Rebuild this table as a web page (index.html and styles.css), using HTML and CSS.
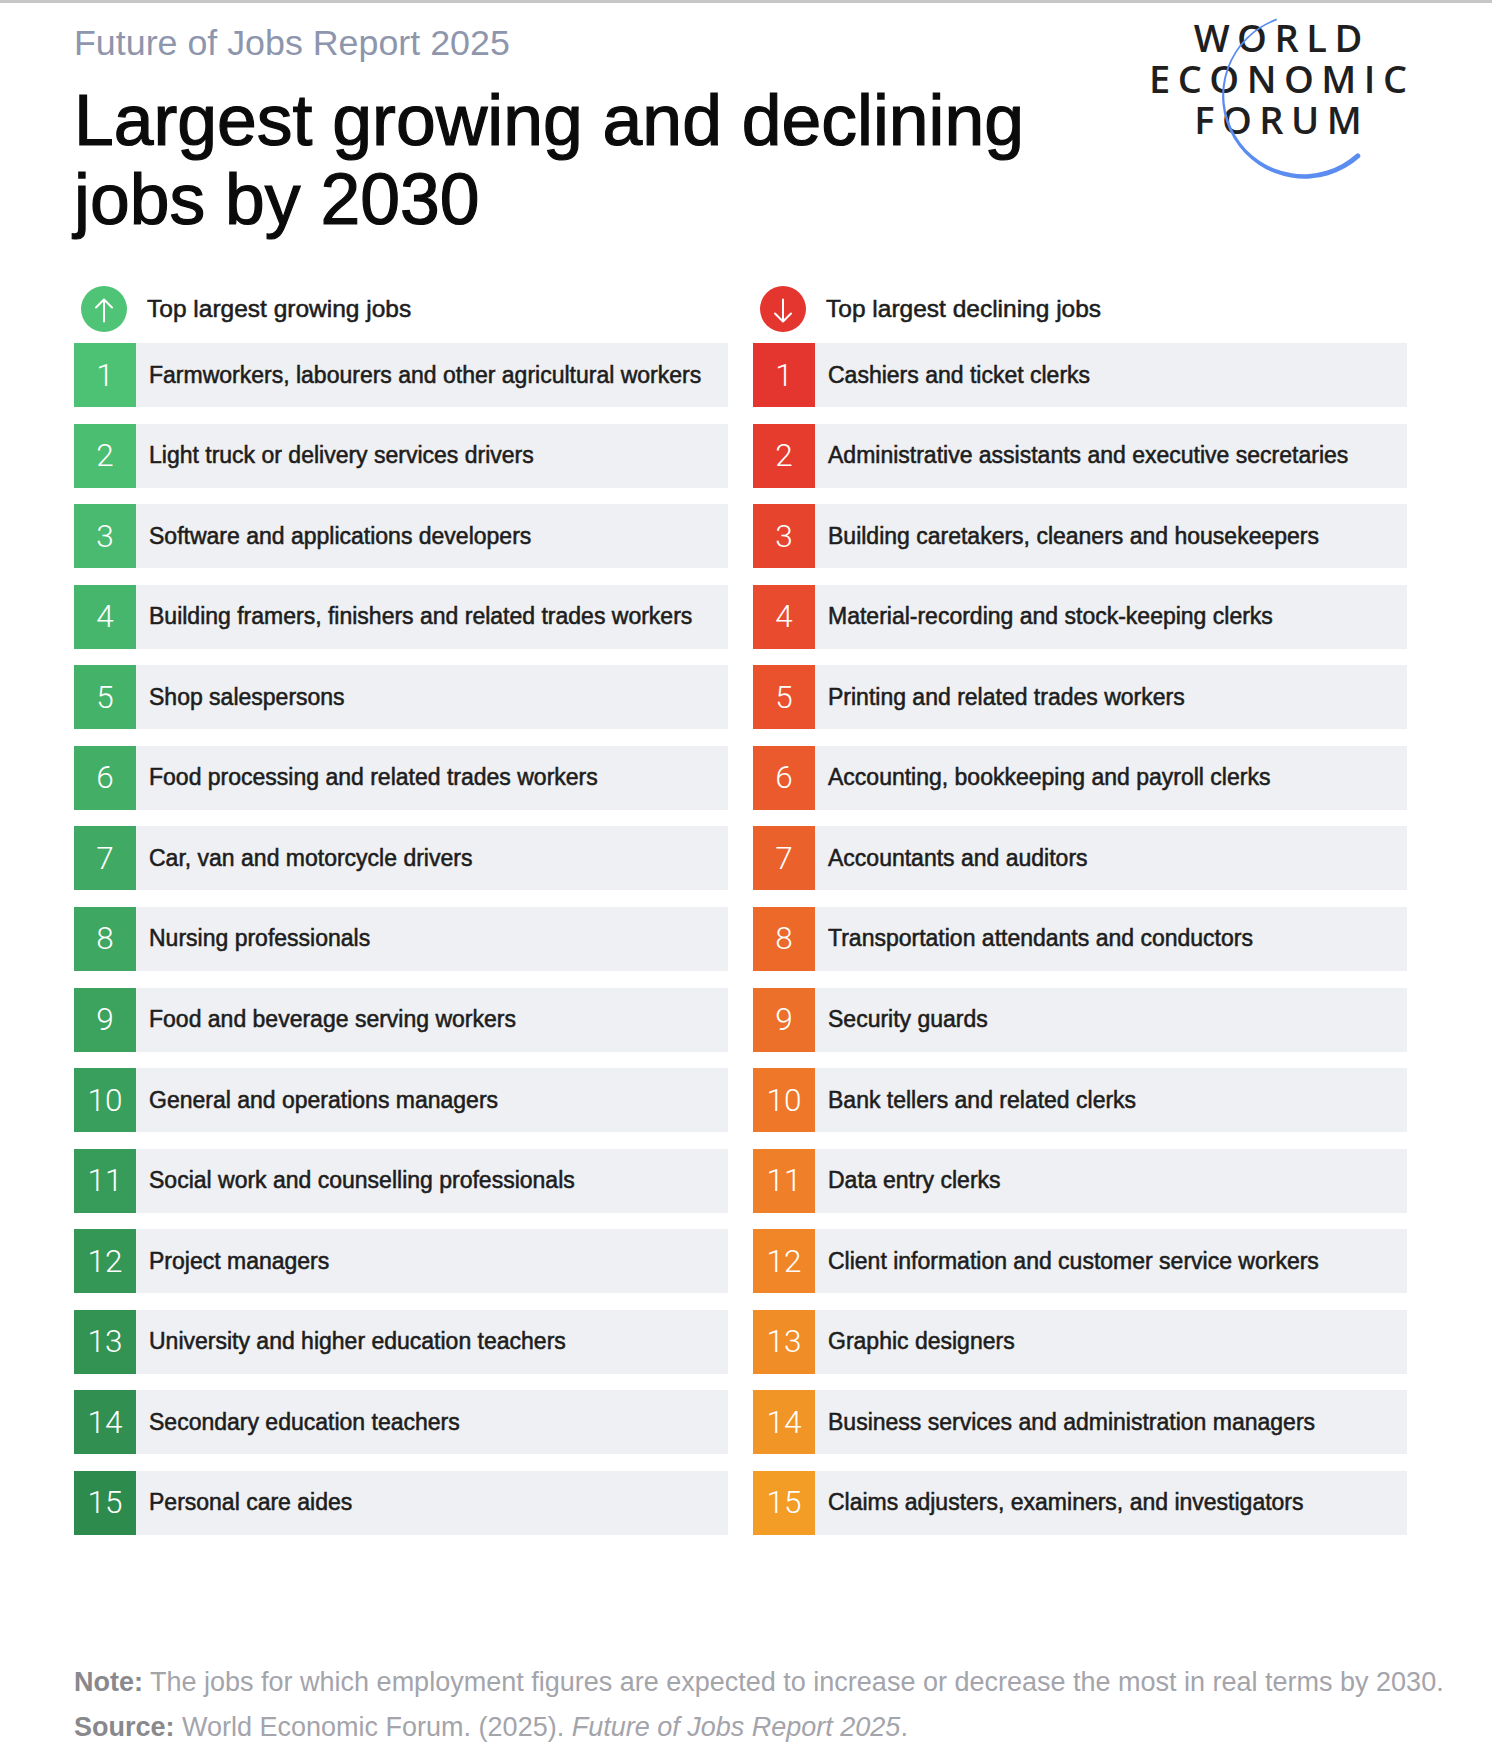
FILE: index.html
```html
<!DOCTYPE html>
<html lang="en">
<head>
<meta charset="utf-8">
<title>Largest growing and declining jobs by 2030</title>
<link rel="stylesheet" href="styles.css">
</head>
<body>
<div class="page">
  <header class="header">
    <div class="heading">
      <div class="kicker">Future of Jobs Report 2025</div>
      <h1 class="title">Largest growing and declining<br>jobs by 2030</h1>
    </div>
    <div class="logo">
      <div class="logo-line">WORLD</div>
      <div class="logo-line">ECONOMIC</div>
      <div class="logo-line">FORUM</div>
      <svg class="logo-arc" viewBox="0 0 320 200" width="320" height="200" aria-hidden="true">
        <path d="M176.79 18.53 A82.5 82.5 0 1 0 259.8 157.51 A2.5 2.5 0 0 0 256.49 153.85 A79.2 79.2 0 1 1 176.8 20.43 Z" fill="#5b8cf0"/>
      </svg>
    </div>
  </header>

  <main class="lists">
    <section class="list">
      <div class="list-head">
        <svg class="head-icon" viewBox="0 0 46 46" width="46" height="46" aria-hidden="true">
          <circle cx="23" cy="23" r="23" fill="#4fc376"/>
          <path d="M23 35.5 V13.8 M15 21.5 L23 13.5 L31 21.5" fill="none" stroke="#fff" stroke-width="2" stroke-linecap="round" stroke-linejoin="round"/>
        </svg>
        <span>Top largest growing jobs</span>
      </div>
      <ol class="rows">
        <li class="row"><span class="rank" style="background:#4DC274">1</span><span class="job">Farmworkers, labourers and other agricultural workers</span></li>
        <li class="row"><span class="rank" style="background:#4BBE71">2</span><span class="job">Light truck or delivery services drivers</span></li>
        <li class="row"><span class="rank" style="background:#49BA6F">3</span><span class="job">Software and applications developers</span></li>
        <li class="row"><span class="rank" style="background:#46B66C">4</span><span class="job">Building framers, finishers and related trades workers</span></li>
        <li class="row"><span class="rank" style="background:#44B269">5</span><span class="job">Shop salespersons</span></li>
        <li class="row"><span class="rank" style="background:#42AE66">6</span><span class="job">Food processing and related trades workers</span></li>
        <li class="row"><span class="rank" style="background:#40AA64">7</span><span class="job">Car, van and motorcycle drivers</span></li>
        <li class="row"><span class="rank" style="background:#3EA761">8</span><span class="job">Nursing professionals</span></li>
        <li class="row"><span class="rank" style="background:#3BA35E">9</span><span class="job">Food and beverage serving workers</span></li>
        <li class="row"><span class="rank" style="background:#399F5C">10</span><span class="job">General and operations managers</span></li>
        <li class="row"><span class="rank" style="background:#379B59">11</span><span class="job">Social work and counselling professionals</span></li>
        <li class="row"><span class="rank" style="background:#359756">12</span><span class="job">Project managers</span></li>
        <li class="row"><span class="rank" style="background:#329353">13</span><span class="job">University and higher education teachers</span></li>
        <li class="row"><span class="rank" style="background:#308F51">14</span><span class="job">Secondary education teachers</span></li>
        <li class="row"><span class="rank" style="background:#2E8B4E">15</span><span class="job">Personal care aides</span></li>
      </ol>
    </section>

    <section class="list">
      <div class="list-head">
        <svg class="head-icon" viewBox="0 0 46 46" width="46" height="46" aria-hidden="true">
          <circle cx="23" cy="23" r="23" fill="#e5352f"/>
          <path d="M23 13.5 V35.2 M15 27.5 L23 35.5 L31 27.5" fill="none" stroke="#fff" stroke-width="2" stroke-linecap="round" stroke-linejoin="round"/>
        </svg>
        <span>Top largest declining jobs</span>
      </div>
      <ol class="rows">
        <li class="row"><span class="rank" style="background:#E5352F">1</span><span class="job">Cashiers and ticket clerks</span></li>
        <li class="row"><span class="rank" style="background:#E63C2E">2</span><span class="job">Administrative assistants and executive secretaries</span></li>
        <li class="row"><span class="rank" style="background:#E7442E">3</span><span class="job">Building caretakers, cleaners and housekeepers</span></li>
        <li class="row"><span class="rank" style="background:#E84B2D">4</span><span class="job">Material-recording and stock-keeping clerks</span></li>
        <li class="row"><span class="rank" style="background:#E9522C">5</span><span class="job">Printing and related trades workers</span></li>
        <li class="row"><span class="rank" style="background:#EA5A2C">6</span><span class="job">Accounting, bookkeeping and payroll clerks</span></li>
        <li class="row"><span class="rank" style="background:#EB612B">7</span><span class="job">Accountants and auditors</span></li>
        <li class="row"><span class="rank" style="background:#EC692A">8</span><span class="job">Transportation attendants and conductors</span></li>
        <li class="row"><span class="rank" style="background:#ED702A">9</span><span class="job">Security guards</span></li>
        <li class="row"><span class="rank" style="background:#EE7729">10</span><span class="job">Bank tellers and related clerks</span></li>
        <li class="row"><span class="rank" style="background:#EF7F29">11</span><span class="job">Data entry clerks</span></li>
        <li class="row"><span class="rank" style="background:#F08628">12</span><span class="job">Client information and customer service workers</span></li>
        <li class="row"><span class="rank" style="background:#F18D27">13</span><span class="job">Graphic designers</span></li>
        <li class="row"><span class="rank" style="background:#F29527">14</span><span class="job">Business services and administration managers</span></li>
        <li class="row"><span class="rank" style="background:#F39C26">15</span><span class="job">Claims adjusters, examiners, and investigators</span></li>
      </ol>
    </section>
  </main>

  <footer class="notes">
    <p class="note"><b>Note:</b> The jobs for which employment figures are expected to increase or decrease the most in real terms by 2030.</p>
    <p class="note"><b>Source:</b> World Economic Forum. (2025). <i>Future of Jobs Report 2025</i>.</p>
  </footer>
</div>
</body>
</html>
```

FILE: styles.css
```css
* {
  box-sizing: border-box;
}

html,
body {
  margin: 0;
  padding: 0;
  background: #ffffff;
}

body {
  border-top: 3px solid #c6c6c6;
  font-family: "Liberation Sans", Arial, Helvetica, sans-serif;
  color: #1d1d1d;
}

.page {
  padding: 0 74px;
  min-height: 1748px;
}

/* ---------- header ---------- */
.header {
  display: flex;
  justify-content: space-between;
  align-items: flex-start;
}

.heading {
  padding-top: 20px;
}

.kicker {
  font-size: 35.8px;
  line-height: 40px;
  color: #8e96ad;
}

.title {
  margin: 18px 0 0;
  font-size: 71.5px;
  line-height: 79px;
  font-weight: 400;
  color: #0b0b0b;
  -webkit-text-stroke: 1.2px #0b0b0b;
}

.logo {
  position: relative;
  margin-top: 14px;
  width: 280px;
  font-family: "Open Sans", "DejaVu Sans", sans-serif;
  font-size: 38px;
  font-weight: 600;
  line-height: 41px;
  letter-spacing: 7.5px;
  text-align: center;
  color: #1f1f1f;
}

.logo-line {
  padding-left: 7.5px;
}

.logo-arc {
  position: absolute;
  left: -38px;
  top: -17px;
}

/* ---------- lists ---------- */
.lists {
  display: grid;
  grid-template-columns: 654px 654px;
  column-gap: 25px;
  margin-top: 47px;
}

.list-head {
  display: flex;
  align-items: center;
  gap: 20px;
  height: 46px;
  padding-left: 7px;
  font-size: 24.5px;
  color: #1d1d1d;
  -webkit-text-stroke: 0.55px #1d1d1d;
}

.head-icon {
  display: block;
  flex: none;
}

.rows {
  list-style: none;
  margin: 11px 0 0;
  padding: 0;
  display: flex;
  flex-direction: column;
  gap: 16.57px;
}

.row {
  display: flex;
  align-items: center;
  height: 64px;
  background: #eff0f3;
}

.rank {
  flex: none;
  width: 62px;
  height: 100%;
  display: flex;
  align-items: center;
  justify-content: center;
  color: #ffffff;
  font-family: Roboto, "Liberation Sans", sans-serif;
  font-weight: 300;
  font-size: 31.5px;
}

.job {
  padding-left: 13px;
  font-size: 23px;
  color: #1d1d1d;
  -webkit-text-stroke: 0.55px #1d1d1d;
  white-space: nowrap;
}

/* ---------- notes ---------- */
.notes {
  margin-top: 125px;
}

.note {
  margin: 0;
  font-size: 27px;
  line-height: 45px;
  color: #a4a4ab;
  white-space: nowrap;
}

.note b {
  color: #88888d;
}

.note i {
  font-style: italic;
}
```
